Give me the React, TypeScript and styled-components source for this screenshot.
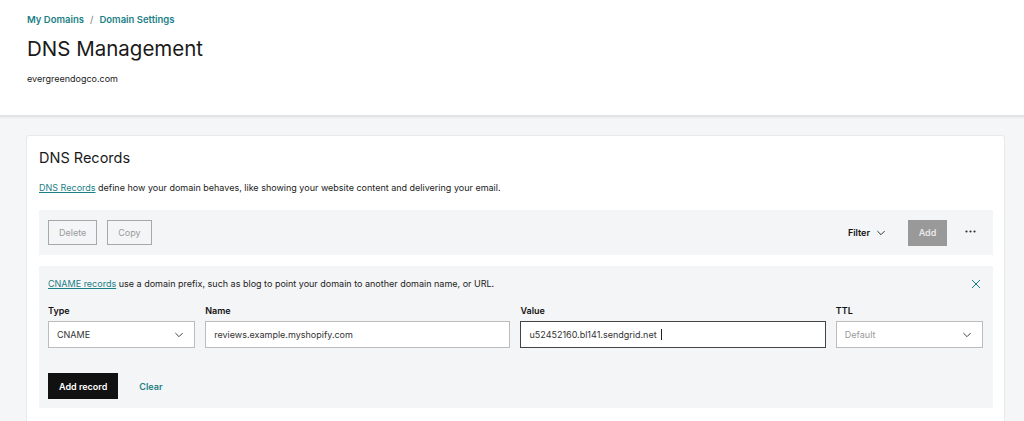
import React from "react";
import styled, { createGlobalStyle } from "styled-components";

const GlobalStyle = createGlobalStyle`
  html, body {
    margin: 0;
    padding: 0;
    background: #f5f6f7;
    font-family: Inter, "Noto Sans", Arial, sans-serif;
    color: #111;
  }
  * { box-sizing: border-box; }
`;

const teal = "#1b7f86";

const Chevron = ({ size = 10, color = "#444" }: { size?: number; color?: string }) => (
  <svg width={size} height={size} viewBox="0 0 12 12" fill="none">
    <path d="M2 4l4 4 4-4" stroke={color} strokeWidth="1.2" strokeLinecap="round" strokeLinejoin="round" />
  </svg>
);

const CloseIcon = () => (
  <svg width="10" height="10" viewBox="0 0 12 12" fill="none">
    <path d="M1.5 1.5l9 9M10.5 1.5l-9 9" stroke={teal} strokeWidth="1.2" strokeLinecap="round" />
  </svg>
);

const DotsIcon = () => (
  <svg width="11" height="3" viewBox="0 0 11 3">
    <circle cx="1.5" cy="1.5" r="1.1" fill="#333" />
    <circle cx="5.5" cy="1.5" r="1.1" fill="#333" />
    <circle cx="9.5" cy="1.5" r="1.1" fill="#333" />
  </svg>
);

export default function App() {
  return (
    <>
      <GlobalStyle />
      <Header>
        <Breadcrumbs>
          <Crumb>My Domains</Crumb>
          <Slash>/</Slash>
          <Crumb>Domain Settings</Crumb>
        </Breadcrumbs>
        <Title>DNS Management</Title>
        <Domain>evergreendogco.com</Domain>
      </Header>
      <Page>
        <Card>
          <CardTitle>DNS Records</CardTitle>
          <Description>
            <Link>DNS Records</Link> define how your domain behaves, like showing your website content and delivering your email.
          </Description>
          <Toolbar>
            <OutlineButton>Delete</OutlineButton>
            <OutlineButton>Copy</OutlineButton>
            <Spacer />
            <Filter>
              Filter <Chevron size={10} color="#333" />
            </Filter>
            <AddButton>Add</AddButton>
            <More>
              <DotsIcon />
            </More>
          </Toolbar>
          <Panel>
            <PanelHead>
              <PanelText>
                <Link>CNAME records</Link> use a domain prefix, such as blog to point your domain to another domain name, or URL.
              </PanelText>
              <CloseIcon />
            </PanelHead>
            <Fields>
              <Field>
                <Label>Type</Label>
                <Box>
                  <BoxText>CNAME</BoxText>
                  <Chevron />
                </Box>
              </Field>
              <Field>
                <Label>Name</Label>
                <Box>
                  <BoxText>reviews.example.myshopify.com</BoxText>
                </Box>
              </Field>
              <Field>
                <Label>Value</Label>
                <Box focused>
                  <BoxText>
                    u52452160.bl141.sendgrid.net <Caret />
                  </BoxText>
                </Box>
              </Field>
              <Field>
                <Label>TTL</Label>
                <Box>
                  <BoxText muted>Default</BoxText>
                  <Chevron />
                </Box>
              </Field>
            </Fields>
            <Actions>
              <PrimaryButton>Add record</PrimaryButton>
              <TextButton>Clear</TextButton>
            </Actions>
          </Panel>
        </Card>
      </Page>
    </>
  );
}

const Header = styled.header`
  background: #fff;
  height: 117px;
  padding: 12px 27px 0;
  border-bottom: 2px solid #e2e3e5;
  box-shadow: 0 1px 2px rgba(0, 0, 0, 0.04);
`;

const Breadcrumbs = styled.div`
  display: flex;
  align-items: center;
  gap: 6px;
  font-size: 9.5px;
  font-weight: 600;
  color: ${teal};
  height: 14px;
`;

const Crumb = styled.span``;

const Slash = styled.span`
  color: #777;
  font-weight: 400;
`;

const Title = styled.h1`
  margin: 9px 0 0;
  font-size: 20.5px;
  font-weight: 400;
  line-height: 28px;
  color: #1a1a1a;
`;

const Domain = styled.div`
  margin-top: 10px;
  font-size: 9px;
  line-height: 12px;
  color: #222;
`;

const Page = styled.main`
  padding: 18px 19px 0 26px;
`;

const Card = styled.section`
  background: #fff;
  border: 1px solid #e8e9eb;
  border-radius: 3px;
  padding: 12px 11px 30px 12px;
`;

const CardTitle = styled.h2`
  margin: 0;
  font-size: 14.5px;
  font-weight: 400;
  line-height: 20px;
  color: #1a1a1a;
`;

const Description = styled.p`
  margin: 14px 0 0;
  font-size: 9px;
  line-height: 12px;
  color: #222;
`;

const Link = styled.span`
  color: ${teal};
  text-decoration: underline;
`;

const Toolbar = styled.div`
  margin-top: 16px;
  height: 45px;
  background: #f4f5f6;
  display: flex;
  align-items: center;
  padding: 0 17px 0 9px;
  gap: 10px;
`;

const OutlineButton = styled.button`
  height: 25px;
  padding: 0 10px;
  background: transparent;
  border: 1px solid #a8a8a8;
  color: #9a9a9a;
  font-family: inherit;
  font-size: 9px;
`;

const Spacer = styled.div`
  flex: 1;
`;

const Filter = styled.div`
  display: flex;
  align-items: center;
  gap: 6px;
  font-size: 9px;
  font-weight: 600;
  color: #111;
  margin-right: 12px;
`;

const AddButton = styled.button`
  height: 26px;
  width: 39px;
  border: none;
  background: #999;
  color: #e8e8e8;
  font-family: inherit;
  font-size: 9px;
  font-weight: 600;
  margin-right: 8px;
`;

const More = styled.span`
  display: flex;
  align-items: center;
  padding-bottom: 3px;
`;

const Panel = styled.div`
  margin-top: 11px;
  background: #f4f5f6;
  padding: 11px 10px 9px 9px;
`;

const PanelHead = styled.div`
  display: flex;
  align-items: center;
  justify-content: space-between;
  padding-right: 2px;
`;

const PanelText = styled.div`
  font-size: 9px;
  line-height: 14px;
  color: #222;
`;

const Fields = styled.div`
  margin-top: 14px;
  display: grid;
  grid-template-columns: 147fr 305fr 305fr 147fr;
  gap: 10px;
`;

const Field = styled.div`
  display: flex;
  flex-direction: column;
  gap: 4px;
`;

const Label = styled.label`
  font-size: 9px;
  font-weight: 600;
  line-height: 12px;
  color: #111;
`;

const Box = styled.div<{ focused?: boolean }>`
  height: 27px;
  background: #fff;
  border: 1px solid ${(p) => (p.focused ? "#444" : "#bcbcbc")};
  display: flex;
  align-items: center;
  justify-content: space-between;
  padding: 0 10px 0 8px;
`;

const BoxText = styled.span<{ muted?: boolean }>`
  display: flex;
  align-items: center;
  gap: 4px;
  font-size: 9px;
  color: ${(p) => (p.muted ? "#999" : "#333")};
`;

const Caret = styled.span`
  display: inline-block;
  width: 1px;
  height: 11px;
  background: #222;
`;

const Actions = styled.div`
  margin-top: 25px;
  display: flex;
  align-items: center;
  gap: 21px;
`;

const PrimaryButton = styled.button`
  height: 26px;
  padding: 0 11px;
  background: #111;
  color: #fff;
  border: none;
  font-family: inherit;
  font-size: 9px;
  font-weight: 600;
`;

const TextButton = styled.button`
  background: none;
  border: none;
  padding: 0;
  color: ${teal};
  font-family: inherit;
  font-size: 9px;
  font-weight: 600;
`;
